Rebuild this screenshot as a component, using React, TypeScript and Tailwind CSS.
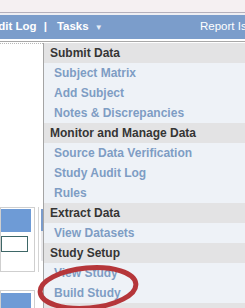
import React from 'react';

type MenuGroup = {
  title: string;
  items: string[];
};

const groups: MenuGroup[] = [
  { title: 'Submit Data', items: ['Subject Matrix', 'Add Subject', 'Notes & Discrepancies'] },
  { title: 'Monitor and Manage Data', items: ['Source Data Verification', 'Study Audit Log', 'Rules'] },
  { title: 'Extract Data', items: ['View Datasets'] },
  { title: 'Study Setup', items: ['View Study', 'Build Study'] },
  { title: 'Administration', items: ['Users'] },
];

const TopBar = () => (
  <div className="flex flex-col">
    <div className="h-[13px] bg-[#f5f0f2] border-b border-[#b4b0bc]" />
    <div className="h-[2px] bg-[#eeeef2]" />
    <div className="h-[24px] bg-[#7b9dcb] flex items-center text-white text-[11.5px] overflow-hidden whitespace-nowrap">
      <span className="font-bold ml-[-17px]">Audit Log</span>
      <span className="font-bold ml-[7px]">|</span>
      <span className="font-bold ml-[10px]">Tasks</span>
      <span className="ml-[6px] text-[8px] mt-[1px] text-[#e8eef8]">▼</span>
      <span className="ml-auto w-[45px] shrink-0 overflow-hidden">Report Issue</span>
    </div>
    <div className="h-[2px] bg-white" />
    <div className="h-[1px] bg-[#a8a8a8]" />
    <div className="h-[1px] bg-white" />
  </div>
);

const LeftColumn = () => (
  <div className="w-[43px] shrink-0 bg-white flex flex-col">
    <div className="h-[2px] border-b border-dotted border-[#b8b8b8]" />
    <div className="mt-[163px] flex gap-[3px]">
      <div className="w-[35px] h-[65px] border border-[#cfcfcf] pt-[1px] pr-[3px] shrink-0">
        <div className="h-[23px] bg-[#6e9bd6]" />
        <div className="mt-[4px] h-[16px] w-[27px] border border-[#3e6767] bg-white" />
      </div>
      <div className="w-[6px] h-[65px] border-l border-[#d4d4d4] pl-[2px] pt-[2px] shrink-0">
        <div className="h-[22px] bg-[#7b9ccc]" />
        <div className="h-[30px] bg-[#e9e9ec]" />
      </div>
    </div>
    <div className="mt-[18px] w-[35px] h-[30px] border border-[#cfcfcf] pt-[2px] pr-[3px]">
      <div className="h-[20px] bg-[#6e9bd6]" />
    </div>
  </div>
);

const Dropdown = () => (
  <div className="flex-1 border-l border-[#a4a4a4] bg-[#eef2f7] flex flex-col">
    {groups.map((g) => (
      <div key={g.title} className="flex flex-col">
        <div className="h-[20px] flex items-center pl-[6px] bg-[#e3e3e4] text-[12px] font-bold text-[#353535] whitespace-nowrap">
          {g.title}
        </div>
        {g.items.map((item) => (
          <div
            key={item}
            className="h-[20px] flex items-center pl-[10px] text-[12px] font-bold text-[#7e9dc4] whitespace-nowrap"
          >
            {item}
          </div>
        ))}
      </div>
    ))}
  </div>
);

export default function App() {
  return (
    <div
      className="relative w-[245px] h-[308px] overflow-hidden bg-white flex flex-col"
      style={{ fontFamily: '"Liberation Sans", Arial, sans-serif' }}
    >
      <TopBar />
      <div className="flex flex-1 min-h-0">
        <LeftColumn />
        <Dropdown />
      </div>
      <svg className="absolute left-[37px] top-[264px]" width="106" height="48" viewBox="0 0 106 48">
        <ellipse
          cx="51"
          cy="24"
          rx="48"
          ry="20"
          transform="rotate(-5 51 24)"
          fill="none"
          stroke="#b5363a"
          strokeWidth="5"
        />
      </svg>
    </div>
  );
}
